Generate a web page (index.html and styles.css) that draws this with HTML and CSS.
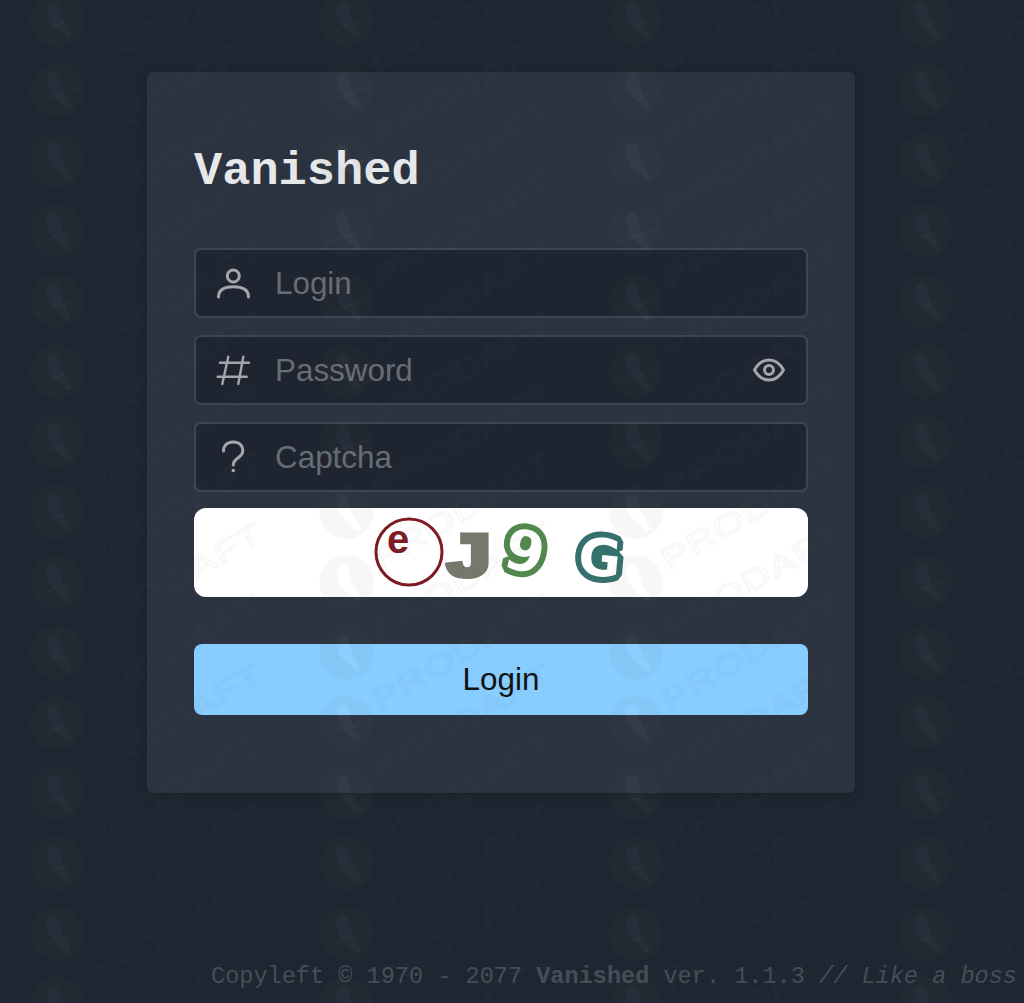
FILE: index.html
```html
<!DOCTYPE html>
<html lang="en">
<head>
    <meta charset="UTF-8">
    <meta name="viewport" content="width=device-width, initial-scale=1.0">
    <title>Vanished</title>
    <link rel="stylesheet" href="styles.css">
</head>
<body>
    <main class="login-card">
        <h1 class="login-title">Vanished</h1>

        <div class="field">
            <span class="field-icon">
                <svg viewBox="0 0 36 36" width="36" height="36"><circle cx="18.300" cy="11" r="6"/><path d="M3.500 32c0-7 6-10.300 15-10.300s15 3.300 15 10.300"/></svg>
            </span>
            <input type="text" placeholder="Login">
        </div>

        <div class="field">
            <span class="field-icon">
                <svg viewBox="0 0 36 36" width="36" height="36"><path class="thin" d="M13.300 4.700 7.300 32M28.300 4.700 23.300 32M5 10.700h29M2.700 24.700h29"/></svg>
            </span>
            <input type="password" placeholder="Password">
            <span class="field-eye">
                <svg viewBox="0 0 32 24" width="32" height="24"><path d="M1.500 12C5 5.500 10 2 16 2s11 3.500 14.500 10C27 18.500 22 22 16 22S5 18.500 1.500 12z"/><circle cx="16" cy="12" r="4.500"/></svg>
            </span>
        </div>

        <div class="field">
            <span class="field-icon">
                <svg viewBox="0 0 36 36" width="36" height="36"><path d="M8.500 12c0-5.500 4-9 9.800-9s9.500 3.500 9.500 9c0 7-9.500 6.500-9.500 14"/><circle class="dot" cx="18.300" cy="31.500" r="1.800"/></svg>
            </span>
            <input type="text" placeholder="Captcha">
        </div>

        <div class="captcha">
            <svg viewBox="0 0 613 89" width="613" height="89">
                <circle class="cap-ring" cx="215" cy="44" r="33"/>
                <text class="cap-e" x="193" y="45">e</text>
                <text class="cap-j" transform="translate(275 47) scale(1.300 1)" y="21">J</text>
                <text class="cap-9" transform="rotate(12 331 43)" x="331" y="63">9</text>
                <text class="cap-g" transform="rotate(5 406 49)" x="406" y="68">G</text>
            </svg>
        </div>

        <button class="login-btn" type="button">Login</button>
    </main>

    <footer class="page-footer">Copyleft © 1970 - 2077 <b>Vanished</b> ver. 1.1.3 <i>// Like a boss</i></footer>

    <!-- watermark sits over the whole page -->
    <svg class="watermark" width="1024" height="1003">
        <defs>
            <pattern id="wm" width="289.5" height="70.3" patternUnits="userSpaceOnUse" patternTransform="translate(0 -10)">
                <path class="wm-disc" fill-rule="evenodd" d="M30 30a27 27 0 1 0 54 0a27 27 0 1 0-54 0zM52 12C55 11 58 13 59 18C60 24 62 30 66 37L72 47L67 49L60 42C52 36 47 28 47 20C47 15 49 13 52 12z"/>
                <path class="wm-bird" d="M52 12C55 11 58 13 59 18C60 24 62 30 66 37L72 47L67 49L60 42C52 36 47 28 47 20C47 15 49 13 52 12z"/>
                <path class="wm-wire" d="M37 42 82 27"/>
                <text class="wm-text" transform="translate(90 18) rotate(-30) scale(1.350 1)">PRODAFT</text>
                <text class="wm-text" transform="translate(90 88.300) rotate(-30) scale(1.350 1)">PRODAFT</text>
                <text class="wm-text" transform="translate(90 158.600) rotate(-30) scale(1.350 1)">PRODAFT</text>
            </pattern>
        </defs>
        <rect width="1024" height="1003" fill="url(#wm)"/>
    </svg>
</body>
</html>
```

FILE: styles.css
```css
* {
    box-sizing: border-box;
}

html, body {
    height: 100%;
}

body {
    margin: 0;
    min-height: 100vh;
    display: flex;
    flex-direction: column;
    align-items: flex-start;
    background: #1e2631;
    font-family: 'Liberation Sans', Arial, sans-serif;
    overflow: hidden;
}

.login-card {
    width: 708px;
    height: 721px;
    margin-top: 72px;
    margin-left: 147px;
    padding: 73px 47px 0;
    background: #2b3340;
    border-radius: 6px;
    box-shadow: 0 2px 10px rgba(0, 0, 0, 0.2);
}

.login-title {
    margin: 0 0 49px;
    height: 54px;
    line-height: 54px;
    font-family: 'Liberation Mono', monospace;
    font-size: 47px;
    font-weight: 700;
    color: #e6e8ea;
}

.field {
    display: flex;
    align-items: center;
    height: 70px;
    margin-bottom: 17px;
    padding: 0 21px 0 19px;
    background: #1e2530;
    border: 2px solid #3a4657;
    border-radius: 7px;
}

.field-icon {
    display: flex;
    flex: none;
    width: 36px;
    margin-right: 24px;
}

.field svg path, .field svg circle {
    fill: none;
    stroke: #a3a6ab;
    stroke-width: 3;
    stroke-linecap: round;
}

.field svg .thin {
    stroke-width: 2.4;
}

.field svg .dot {
    fill: #a3a6ab;
    stroke: none;
}

.field input {
    flex: 1;
    min-width: 0;
    padding: 2px 0 0;
    border: none;
    outline: none;
    background: transparent;
    font-family: inherit;
    font-size: 31.4px;
    color: #e6e8ea;
}

.field input::placeholder {
    color: #686d75;
    opacity: 1;
}

.field-eye {
    display: flex;
    flex: none;
}

.captcha {
    height: 89px;
    margin-top: -1px;
    background: #fff;
    border-radius: 12px;
    overflow: hidden;
}

.captcha svg {
    display: block;
}

.cap-ring {
    fill: none;
    stroke: #7d1a22;
    stroke-width: 3;
}

.cap-e {
    font-family: 'Liberation Sans', sans-serif;
    font-size: 40px;
    font-weight: 700;
    fill: #7d1a22;
}

.cap-j {
    font-family: 'Liberation Sans', sans-serif;
    font-size: 60px;
    font-weight: 700;
    text-anchor: middle;
    fill: #77776b;
    stroke: #77776b;
    stroke-width: 5;
}

.cap-9, .cap-g {
    font-family: 'DejaVu Sans', sans-serif;
    font-weight: 700;
    text-anchor: middle;
    fill: #fff;
    paint-order: stroke;
    stroke-width: 12;
    stroke-linejoin: bevel;
}

.cap-9 {
    font-size: 56px;
    stroke: #52884e;
}

.cap-g {
    font-size: 52px;
    stroke: #35706c;
}

.login-btn {
    display: block;
    width: 100%;
    height: 71px;
    margin-top: 47px;
    border: none;
    border-radius: 8px;
    background: #87cdff;
    font-family: inherit;
    font-size: 31.4px;
    color: #111;
}

.page-footer {
    align-self: flex-end;
    margin-top: auto;
    padding: 0 7px 13px 0;
    line-height: 27px;
    font-family: 'Liberation Mono', monospace;
    font-size: 23.57px;
    color: #474d57;
    white-space: nowrap;
}

.watermark {
    position: fixed;
    top: 0;
    left: 0;
    pointer-events: none;
}

.wm-disc {
    fill: rgba(100, 100, 100, 0.05);
}

.wm-bird {
    fill: rgba(255, 255, 255, 0.04);
}

.wm-wire {
    fill: none;
    stroke: rgba(255, 255, 255, 0.03);
    stroke-width: 1;
}

.wm-text {
    font-family: 'Liberation Sans', sans-serif;
    font-size: 30px;
    letter-spacing: 1px;
    fill: none;
    stroke: rgba(100, 100, 100, 0.06);
    stroke-width: 1.5;
}
```
